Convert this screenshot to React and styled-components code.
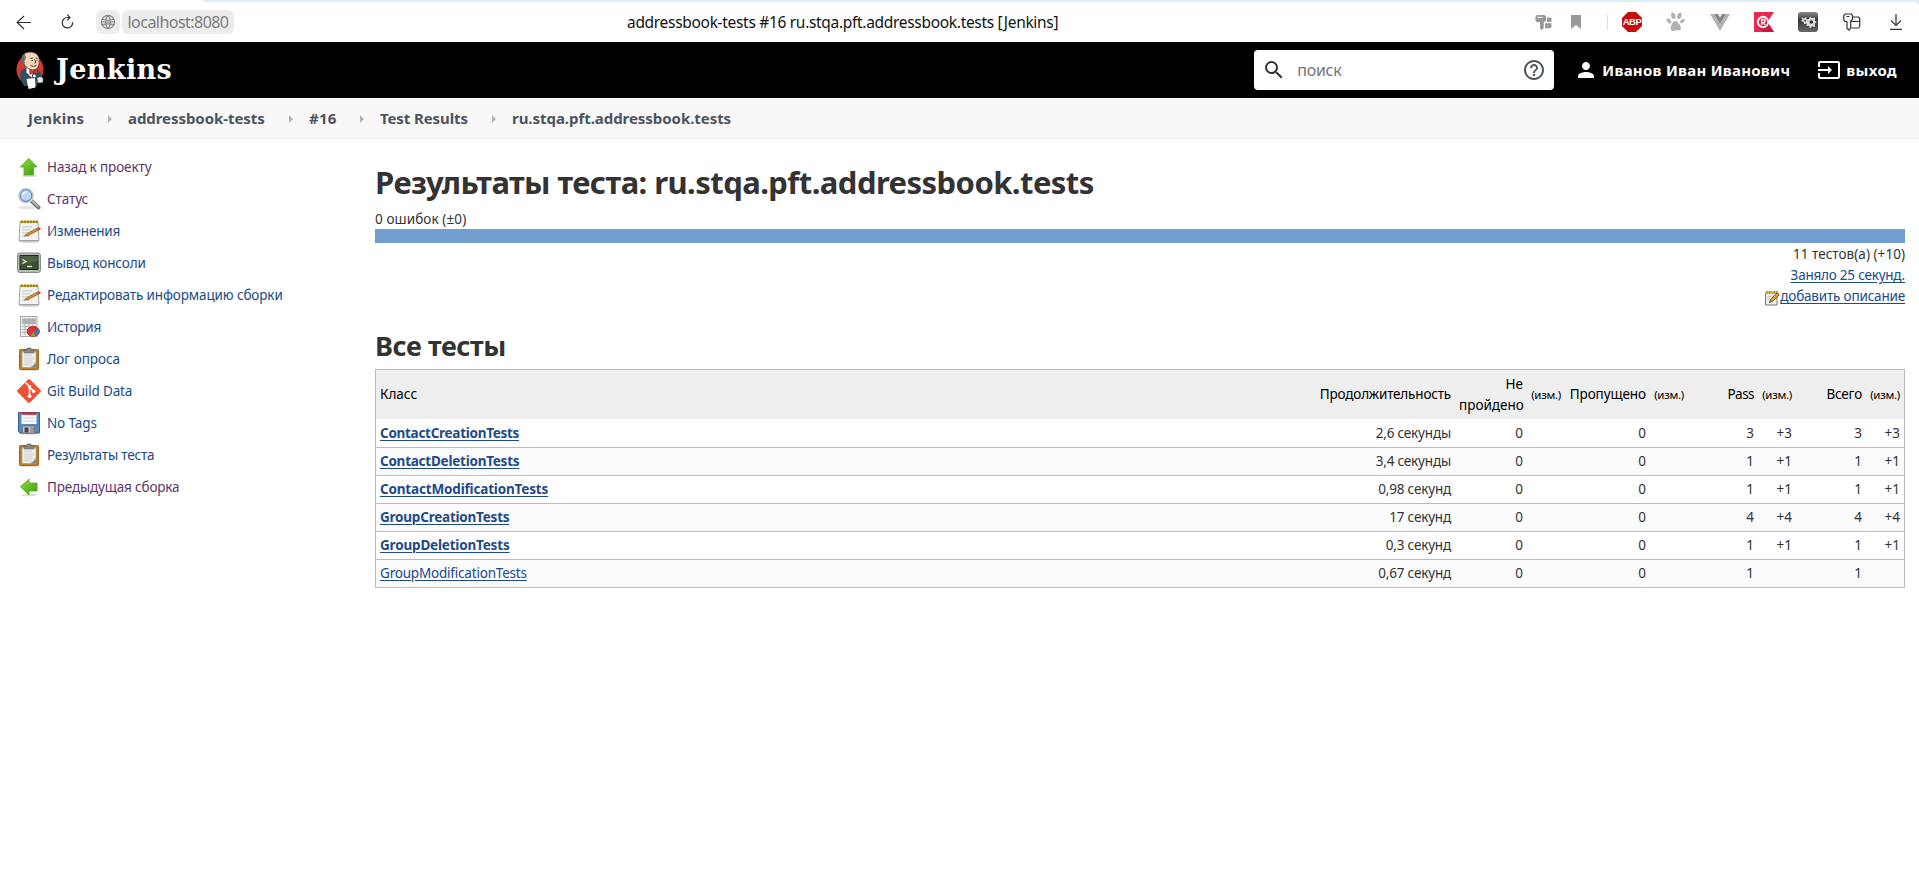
import React from 'react';
import styled, { createGlobalStyle, css } from 'styled-components';
import { MdSearch, MdHelpOutline, MdPerson, MdInput } from 'react-icons/md';

const Global = createGlobalStyle`
  * { box-sizing: border-box; }
  html, body { margin: 0; background: #fff; }
  body {
    font-family: 'Noto Sans', 'Open Sans', sans-serif;
    font-size: 13.5px;
    line-height: 21px;
    color: #333;
    overflow: hidden;
  }
  svg { display: block; flex: none; }
`;

const tracking = css`letter-spacing: ${(p) => p.$ls || 0}px;`;

/* ---------- browser bar ---------- */
const BrowserBar = styled.div`
  height: 42px;
  padding-top: 2px;
  background: linear-gradient(90deg, #fff 203px, #dbf0f5 203px);
`;
const BrowserInner = styled.div`
  height: 40px;
  display: grid;
  grid-template-columns: 620px 1fr 420px;
  align-items: center;
  background: #fff;
  border-radius: 0 5px 0 0;
`;
const BrowserLeft = styled.div`
  display: flex;
  align-items: center;
  padding-left: 16px;
`;
const ReloadSlot = styled.span`
  margin: 0 22px 0 29px;
`;
const Chip = styled.span`
  height: 24px;
  display: flex;
  align-items: center;
  justify-content: center;
  border-radius: 6px;
  background: #ececec;
`;
const GlobeChip = styled(Chip)`
  width: 24px;
  margin-right: 2px;
`;
const UrlChip = styled(Chip)`
  width: 112px;
  color: #7c7c7c;
  font-size: 16px;
  ${tracking}
`;
const PageTitle = styled.div`
  padding-left: 7px;
  color: #111;
  font-size: 15.5px;
  white-space: nowrap;
  ${tracking}
`;
const Extensions = styled.div`
  display: flex;
  align-items: center;
  padding-left: 36px;
`;
const Ext = styled.span`
  width: ${(p) => p.$w || 44}px;
  display: flex;
  justify-content: flex-start;
`;

/* ---------- Jenkins header ---------- */
const Header = styled.header`
  height: 56px;
  display: flex;
  align-items: center;
  padding: 0 22px 0 16px;
  background: #000;
  color: #fff;
`;
const Brand = styled.a`
  display: flex;
  align-items: center;
  gap: 12px;
`;
const BrandName = styled.span`
  font: 700 27px/40px 'DejaVu Serif', serif;
  ${tracking}
`;
const SearchBox = styled.div`
  width: 300px;
  height: 40px;
  margin-left: auto;
  padding: 0 8px;
  display: flex;
  align-items: center;
  background: #fff;
  border-radius: 4px;
  color: #333;
`;
const Placeholder = styled.span`
  flex: 1;
  padding-left: 11px;
  color: #757575;
  font-size: 16px;
  ${tracking}
`;
const HelpIcon = styled(MdHelpOutline)`
  color: #4d545d;
`;
const HeaderLink = styled.a`
  display: flex;
  align-items: center;
  gap: ${(p) => p.$gap}px;
  margin-left: ${(p) => p.$ml}px;
  font-size: 15px;
  font-weight: 700;
  white-space: nowrap;
  ${tracking}
`;

/* ---------- breadcrumbs ---------- */
const Crumbs = styled.nav`
  height: 41px;
  display: flex;
  align-items: center;
  padding: 1px 0 0 28px;
  background: #f8f8f8;
  border-bottom: 1px solid #ececec;
`;
const Crumb = styled.a`
  width: ${(p) => p.$w}px;
  color: #4d545d;
  font-size: 15px;
  font-weight: 700;
  white-space: nowrap;
  ${tracking}
`;
const CrumbArrow = styled.i`
  margin: 0 16px 0 26px;
  border: solid transparent;
  border-width: 4px 0 4px 4px;
  border-left-color: #b4b4b4;
`;

/* ---------- body ---------- */
const Page = styled.div`
  display: grid;
  grid-template-columns: 375px 1530px;
`;
const Side = styled.nav`
  padding: 12px 0 0 17px;
`;
const Task = styled.a`
  height: 32px;
  display: flex;
  align-items: center;
  gap: 6px;
  color: ${(p) => (p.$visited ? '#5c3566' : '#204a87')};
  white-space: nowrap;
  ${tracking}
`;
const TaskLabel = styled.span`
  padding-top: 1px;
`;
const Main = styled.main`
  padding-top: 20px;
`;
const H1 = styled.h1`
  margin: 0;
  font-size: 31px;
  line-height: 46px;
  font-weight: 700;
  white-space: nowrap;
  ${tracking}
`;
const Failures = styled.div`
  margin-top: 4px;
  line-height: 20px;
  ${tracking}
`;
const Bar = styled.div`
  height: 14px;
  margin-bottom: 1px;
  background: #729fcf;
`;
const Summary = styled.div`
  display: flex;
  flex-direction: column;
  align-items: flex-end;
`;
const SummaryText = styled.div`
  ${tracking}
`;
const Link = styled.a`
  color: #204a87;
  text-decoration: underline;
  text-underline-offset: 2px;
  font-weight: ${(p) => (p.$bold ? 700 : 400)};
  ${tracking}
`;
const DescriptionRow = styled.div`
  display: flex;
  align-items: center;
  svg { margin-top: 3px; }
`;
const H2 = styled.h2`
  margin: 20px 0 4px;
  font-size: 27px;
  line-height: 38px;
  font-weight: 700;
  ${tracking}
`;
const Table = styled.div`
  border: 1px solid #bbb;
`;
const Row = styled.div`
  display: grid;
  grid-template-columns: 1fr 140px 72px 38px 85px 38px 70px 38px 70px 38px;
  align-items: center;
  height: 28px;
  background: ${(p) => (p.$alt ? '#fbfbfb' : '#fff')};
  & + & { border-top: 1px solid #bbb; }
`;
const HeadRow = styled(Row)`
  height: 49px;
  background: #eee;
  color: #000;
  & + ${Row} { border-top: 0; }
`;
const Cell = styled.div`
  padding: 0 4px;
  text-align: ${(p) => (p.$left ? 'left' : 'right')};
  font-size: ${(p) => (p.$small ? 11.5 : 13.5)}px;
  white-space: ${(p) => (p.$wrap ? 'normal' : 'nowrap')};
  ${tracking}
`;

/* ---------- icons ---------- */
const Svg = ({ w = 24, h = w, vb = `0 0 ${w} ${h}`, children }) => (
  <svg width={w} height={h} viewBox={vb} fill="none">{children}</svg>
);

const BackIcon = () => (
  <Svg w={16} h={16}><path d="M1 8.5h14M8 2L1.2 8.5 8 15" stroke="#333" strokeWidth="1.2" /></Svg>
);
const ReloadIcon = () => (
  <Svg w={13} h={16}>
    <path d="M11.6 8.2a5.2 5.2 0 1 1-5-4.7h2.2" stroke="#333" strokeWidth="1.2" />
    <path d="M6.2.7L9 3.5 6.2 6.3" stroke="#333" strokeWidth="1.2" />
  </Svg>
);
const GlobeIcon = () => (
  <Svg w={16}>
    <g stroke="#858585" strokeWidth="1.2">
      <circle cx="8" cy="8" r="6.6" />
      <path d="M8 1.4C4.7 4.6 4.7 11.4 8 14.6M8 1.4c3.3 3.2 3.3 10 0 13.2M1.4 8h13.2M2.5 5.2c3 1.2 8 1.2 11 0M2.5 10.9c3-1.2 8-1.2 11 0" />
    </g>
  </Svg>
);
const KeyCardGrey = () => (
  <Svg w={17} h={17}>
    <path d="M2 1h7.5l1.5 1.5V7L8.800 8.200V14L7 16l-2-1.500V8.200H2L.5 6.700V2.500z" fill="#999" />
    <path d="M2.500 3.300h5" stroke="#fff" strokeWidth="1" />
    <path d="M12 3.500h3.500l1 1V8H12zM10 9.300h6.500V13l-1.200 1.200H10z" fill="#999" />
  </Svg>
);
const BookmarkIcon = () => (
  <Svg w={10} h={14}><path d="M0 0h10v14l-5-4-5 4z" fill="#999" /></Svg>
);
const Divider = styled.span`
  width: 1px;
  height: 15px;
  background: #ddd;
  margin: 0 14px 0 0;
`;
const AbpBadge = styled.span`
  width: 20px;
  height: 20px;
  background: #c70d0c;
  color: #fff;
  clip-path: polygon(30% 0, 70% 0, 100% 30%, 100% 70%, 70% 100%, 30% 100%, 0 70%, 0 30%);
  font: 700 9.5px/20px 'Liberation Sans Narrow', 'Liberation Sans', sans-serif;
  letter-spacing: -0.5px;
  text-align: center;
`;
const PawIcon = () => (
  <Svg w={20}>
    <g fill="#b0b0b0">
      <ellipse cx="7.300" cy="4" rx="2.100" ry="3.200" transform="rotate(-12 7 4)" />
      <ellipse cx="13.300" cy="3.800" rx="2" ry="3.200" transform="rotate(18 13 4)" />
      <ellipse cx="3" cy="9" rx="1.800" ry="2.800" transform="rotate(-40 3 9)" />
      <ellipse cx="16.700" cy="9.500" rx="1.600" ry="2.700" transform="rotate(55 17 9)" />
      <path d="M9 9c2.300-.5 3 1.700 4.500 3.400 2 2 1.900 5.800-.6 6-2.200.1-2.800-.7-4.200.2-2.300 1.200-4.200-.3-3.900-2.700.4-2.800 1.800-6.400 4.200-6.900z" />
    </g>
  </Svg>
);
const VueIcon = () => (
  <Svg w={20} h={17}>
    <path d="M0 0h4.200L10 10.200 15.800 0H20L10 17z" fill="#b4b4b4" />
    <path d="M4.200 0H8l2 3.500L12 0h3.800L10 10.200z" fill="#868686" />
  </Svg>
);
const RedFlagIcon = () => (
  <Svg w={20}>
    <path d="M0 0h20l-6.500 10L20 20H0z" fill="#e72a4f" />
    <path d="M14 6l-9 9.500L9 20h11l-6.500-10z" fill="#c91c45" />
    <circle cx="9" cy="10" r="5.200" stroke="#fff" strokeWidth="1.900" />
    <path d="M7.700 13V7.500h1.800a1.500 1.500 0 0 1 0 3.200H7.700m1.800 0l1.500 2.300" stroke="#fff" strokeWidth="1.400" />
  </Svg>
);
const MonoGearIcon = () => (
  <Svg w={20}>
    <defs><linearGradient id="mg" x1="0" y1="0" x2="0" y2="1"><stop stopColor="#8a8a8a" /><stop offset=".4" stopColor="#383838" /><stop offset="1" stopColor="#666" /></linearGradient></defs>
    <rect width="20" height="20" rx="3" fill="url(#mg)" />
    <path d="M3 5l3 1.500L8 5l.8 2.500L11 7l1-2.500 2 1.800 3-1-.2 3.200 2 1.500-2 1.500.2 3.500-3-.8-2 2-1-2.500-2.500.3.300-2.500L6 12 5.500 9.800 2.500 9l2-1z" fill="#ddd" />
    <circle cx="13.300" cy="10" r="1.800" fill="#333" />
    <circle cx="7.200" cy="8.800" r="1" fill="#555" />
  </Svg>
);
const KeyCardIcon = () => (
  <Svg w={18} h={18}>
    <g stroke="#333" strokeWidth="1.200" strokeLinejoin="round">
      <path d="M2.500 1H8l1.500 1.500v4L7.700 8v7.200L6 17l-2-1.800V8.500H2.200L.8 7V2.500z" />
      <path d="M3.500 3.500h3M10 4h5.500l1.200 1.200v8.300L15.500 15H8.500M8.500 8.500h8.200" />
    </g>
  </Svg>
);
const DownloadIcon = () => (
  <Svg w={12} h={16}><path d="M6 0v11.500M1 6.500l5 5 5-5M0 15.300h12" stroke="#333" strokeWidth="1.200" /></Svg>
);

const Butler = () => (
  <Svg w={28} h={38}>
    <ellipse cx="14" cy="18.500" rx="13.500" ry="15" fill="#d33833" />
    <path d="M5 19L10 17l6 3 5-1 4 3 1 7-4 2-1 4H8c-2-3-4-7-4-10z" fill="#335061" />
    <path d="M10.500 16.500l7 2-2 8-5-5z" fill="#fff" />
    <path d="M6 6C8 1.500 12 .8 16 1.200c5 .5 7.500 4 7.300 9 0 4-1.500 8-5.300 8.600-4 .6-8-2-9.500-5.300C6.500 12 5.500 9 6 6z" fill="#f0d6b7" stroke="#3a2d2a" strokeWidth=".7" />
    <path d="M8.500 3C5 5 4.700 9 6.500 12.500l2.500 2L8.500 10l1.500-3z" fill="#6d6b6d" />
    <path d="M14.500 7.500l2.500-.5M19.500 7l2 .5M18.500 8.500l1.500 3-1.500.8M14.500 14.300c2 1.400 4 1.200 6 0M15.500 9.500h1.500M20.500 9.500h1" stroke="#3a2d2a" strokeWidth=".9" />
    <path d="M13.500 18.500l4 1.500 4-1.500v4.500l-4-1.500-3.500 2z" fill="#d33833" stroke="#811" strokeWidth=".5" />
    <circle cx="18.300" cy="25" r="1.500" fill="#fff" />
    <path d="M10.500 28l8.500-1 .5 9.500-7 1.500z" fill="#fff" />
    <path d="M21 27c2-1.500 5-1.500 6 0v4.500l-5 .5z" fill="#e8e8e8" stroke="#555" strokeWidth=".5" />
  </Svg>
);

const Greens = ({ id }) => (
  <defs><linearGradient id={id} x1="0" y1="0" x2="1" y2="1"><stop stopColor="#8ee03a" /><stop offset="1" stopColor="#3c9a12" /></linearGradient></defs>
);
const UpIcon = () => (
  <Svg><Greens id="gu" /><ellipse cx="12" cy="20.800" rx="8" ry="1.500" fill="#ddd" />
    <path d="M11.700 3.300L20 12h-3.500v8h-9.500v-8H3.300z" fill="url(#gu)" stroke="#58a52c" strokeWidth=".8" /></Svg>
);
const LeftIcon = () => (
  <Svg><Greens id="gl" /><ellipse cx="12" cy="20" rx="8" ry="1.300" fill="#ddd" />
    <path d="M3.300 11.700L12 4v4h8v8h-8v4z" fill="url(#gl)" stroke="#58a52c" strokeWidth=".8" /></Svg>
);
const LensIcon = () => (
  <Svg>
    <ellipse cx="10" cy="20.500" rx="9" ry="2" fill="#e8e8e8" />
    <path d="M14.500 14l7 6.500" stroke="#777" strokeWidth="4" strokeLinecap="round" />
    <path d="M14.500 13.600l6.800 6.300" stroke="#bbb" strokeWidth="1.500" />
    <circle cx="9" cy="8.600" r="6.900" fill="#bcd6f3" stroke="#c9ccd0" strokeWidth="2" />
    <circle cx="9" cy="8.600" r="5.800" stroke="#4e7cb8" strokeWidth="1" />
    <path d="M5 8c0-3 3-4.500 6-3.500C9 6 7 7 5 8z" fill="#e9f3fd" />
  </Svg>
);
const NotepadIcon = () => (
  <Svg>
    <ellipse cx="12" cy="22.500" rx="10" ry="1.300" fill="#ccc" />
    <path d="M3 3h18l1 18.500H2z" fill="#f2f2f0" stroke="#999" strokeWidth=".9" />
    <path d="M3 1.800h18v2.200H3z" fill="#c4a32c" />
    <path d="M5 1.200v3M8 1.200v3M11 1.200v3M14 1.200v3M17 1.200v3M20 1.200v3" stroke="#806a1b" strokeWidth="1" />
    <path d="M5 8h10M5 11h8M5 14h5M5 17h8" stroke="#c6c6c6" strokeWidth="1" />
    <path d="M7.500 17l3-2.800 9.500-4.800 1.200 1.700-9.500 5.200z" fill="#d99a36" stroke="#80541a" strokeWidth=".8" />
    <path d="M20 9.300l2.300-1 1.700 1.200-2 1.800z" fill="#d5392c" />
  </Svg>
);
const SmallNotepadIcon = () => (
  <Svg w={16}>
    <path d="M1.500 2.500h11.500v12.500h-11.500z" fill="#eeeeec" stroke="#777" />
    <path d="M1 1.200h13v2.800H1z" fill="#e3bf2f" />
    <path d="M3 1v2.500M5.500 1v2.500M8 1v2.500M10.500 1v2.500M13 1v2.500" stroke="#8f7411" strokeWidth=".8" />
    <path d="M3.500 6.500h5M3.500 9h3" stroke="#c4c4c4" />
    <path d="M5.500 12.500l1.200-3 6.300-6.500 2.300 1.700-6.500 6.500z" fill="#e5a83b" stroke="#5f430d" strokeWidth=".9" />
  </Svg>
);
const TerminalIcon = () => (
  <Svg>
    <rect x=".5" y="2" width="23" height="19.500" rx="2.500" fill="#b9bbb5" stroke="#888a85" />
    <rect x="3" y="4.500" width="18" height="14" fill="#3c5130" stroke="#1c2716" />
    <path d="M3.500 5h17v5l-17 4z" fill="#4c6340" />
    <path d="M5.500 8.500L9 10.500l-3.500 2" stroke="#e8f5df" strokeWidth="1.300" />
    <path d="M10 15.500h5" stroke="#e8f5df" strokeWidth="1.400" />
    <path d="M15.500 20.300h2" stroke="#8ae234" />
  </Svg>
);
const HistoryIcon = () => (
  <Svg>
    <rect x="3.500" y="1.500" width="16.500" height="20" fill="#ececec" stroke="#aaa" />
    <path d="M5 3.500h14v5H5z" fill="#b5b5b5" />
    <path d="M5 8.500h14M5 11.500h14M5 14.500h14M5 17.500h14M8 3v17M12 3v17M16 3v17" stroke="#aaa" strokeWidth=".8" />
    <ellipse cx="16.300" cy="16.500" rx="6.200" ry="5" fill="#dc3434" stroke="#a40000" strokeWidth=".6" />
    <path d="M16.300 16.500l5.500-2c1 2.500.2 5-3 6.200z" fill="#4a76b8" />
    <path d="M16.300 16.500l2 4.600c-1.700.6-3.500.3-4.500-.4z" fill="#73b42c" />
  </Svg>
);
const ClipboardIcon = () => (
  <Svg>
    <ellipse cx="12" cy="22.800" rx="10" ry="1.200" fill="#ddd" />
    <rect x="2.500" y="2.500" width="19" height="20" rx=".8" fill="#c17d24" stroke="#a0691a" />
    <path d="M5 4.500h14v16H5z" fill="#eee" stroke="#999" strokeWidth=".6" />
    <path d="M7 8.500h8M7 11.500h10M7 14.500h8M7 17.500h6" stroke="#dadada" strokeWidth="2" />
    <path d="M13.500 20.500l5.500-5v5z" fill="#888a85" />
    <path d="M13.500 20.500l1-4 4.500-1z" fill="#fff" stroke="#aaa" strokeWidth=".4" />
    <path d="M7 6V3h3V1h4v2h3v3z" fill="#888a85" stroke="#666" strokeWidth=".6" />
  </Svg>
);
const GitIcon = () => (
  <Svg>
    <path d="M11 .5a1.500 1.500 0 0 1 2 0L23.500 11a1.500 1.500 0 0 1 0 2L13 23.500a1.500 1.500 0 0 1-2 0L.5 13a1.500 1.500 0 0 1 0-2z" fill="#f05033" />
    <path d="M8.500 3.500l4 4v10M12.500 8l4 4" stroke="#fff" strokeWidth="1.500" />
    <circle cx="12.500" cy="7.700" r="1.800" fill="#fff" /><circle cx="12.500" cy="17.200" r="1.900" fill="#fff" /><circle cx="16.600" cy="12.200" r="1.800" fill="#fff" />
  </Svg>
);
const FloppyIcon = () => (
  <Svg>
    <ellipse cx="12" cy="22.500" rx="10" ry="1" fill="#ccc" />
    <path d="M1.500 1.500h21v20.500H3L1.500 20.500z" fill="#5b86c4" stroke="#3d5f96" />
    <path d="M4.500 2h15v11h-15z" fill="#fbfbfb" />
    <path d="M4.500 1.500h15v2.300h-15z" fill="#dd2222" />
    <path d="M6 7h12M6 10h12" stroke="#ccc" />
    <path d="M5.500 15h12v7h-12z" fill="#c9c9c9" stroke="#555" strokeWidth=".6" />
    <path d="M7.500 16.500h4v5h-4z" fill="#444" />
    <path d="M13 16h4v5.500h-4z" fill="#9b9b9b" />
  </Svg>
);

/* ---------- data ---------- */
const tasks = [
  [UpIcon, 'Назад к проекту', -0.12, true],
  [LensIcon, 'Статус', -0.11, true],
  [NotepadIcon, 'Изменения', -0.2],
  [TerminalIcon, 'Вывод консоли', -0.12],
  [NotepadIcon, 'Редактировать информацию сборки', -0.12],
  [HistoryIcon, 'История', -0.2],
  [ClipboardIcon, 'Лог опроса', -0.05],
  [GitIcon, 'Git Build Data', -0.16],
  [FloppyIcon, 'No Tags', -0.14],
  [ClipboardIcon, 'Результаты теста', -0.18],
  [LeftIcon, 'Предыдущая сборка', -0.16, true],
];

const crumbs = [
  ['Jenkins', 54, 0.2],
  ['addressbook-tests', 135, -0.06],
  ['#16', 25, 0.3],
  ['Test Results', 86, -0.1],
  ['ru.stqa.pft.addressbook.tests', 220, -0.05],
];

const results = [
  ['ContactCreationTests', '2,6 секунды', 3, '+3', -0.28],
  ['ContactDeletionTests', '3,4 секунды', 1, '+1', -0.24],
  ['ContactModificationTests', '0,98 секунд', 1, '+1', -0.17],
  ['GroupCreationTests', '17 секунд', 4, '+4', -0.22],
  ['GroupDeletionTests', '0,3 секунд', 1, '+1', -0.18],
  ['GroupModificationTests', '0,67 секунд', 1, '', -0.2],
];

export default function App() {
  return (
    <>
      <Global />
      <BrowserBar>
        <BrowserInner>
          <BrowserLeft>
            <BackIcon />
            <ReloadSlot><ReloadIcon /></ReloadSlot>
            <GlobeChip><GlobeIcon /></GlobeChip>
            <UrlChip $ls={-0.54}>localhost:8080</UrlChip>
          </BrowserLeft>
          <PageTitle $ls={-0.31}>addressbook-tests #16 ru.stqa.pft.addressbook.tests [Jenkins]</PageTitle>
          <Extensions>
            <Ext $w={36}><KeyCardGrey /></Ext>
            <Ext $w={36}><BookmarkIcon /></Ext>
            <Divider />
            <Ext><AbpBadge>ABP</AbpBadge></Ext>
            <Ext><PawIcon /></Ext>
            <Ext><VueIcon /></Ext>
            <Ext><RedFlagIcon /></Ext>
            <Ext $w={45}><MonoGearIcon /></Ext>
            <Ext $w={47}><KeyCardIcon /></Ext>
            <DownloadIcon />
          </Extensions>
        </BrowserInner>
      </BrowserBar>

      <Header>
        <Brand>
          <Butler />
          <BrandName $ls={0.4}>Jenkins</BrandName>
        </Brand>
        <SearchBox>
          <MdSearch size={24} />
          <Placeholder $ls={-0.3}>поиск</Placeholder>
          <HelpIcon size={24} />
        </SearchBox>
        <HeaderLink $gap={4} $ml={20} $ls={0.26}>
          <MdPerson size={24} />
          Иванов Иван Иванович
        </HeaderLink>
        <HeaderLink $gap={5} $ml={27} $ls={0.38}>
          <MdInput size={24} />
          выход
        </HeaderLink>
      </Header>

      <Crumbs>
        {crumbs.map(([label, w, ls], i) => (
          <React.Fragment key={label}>
            {i > 0 && <CrumbArrow />}
            <Crumb $w={w} $ls={ls}>{label}</Crumb>
          </React.Fragment>
        ))}
      </Crumbs>

      <Page>
        <Side>
          {tasks.map(([Icon, label, ls, visited]) => (
            <Task key={label} $ls={ls} $visited={visited}>
              <Icon />
              <TaskLabel>{label}</TaskLabel>
            </Task>
          ))}
        </Side>

        <Main>
          <H1 $ls={-0.56}>Результаты теста: ru.stqa.pft.addressbook.tests</H1>
          <Failures $ls={0.1}>0 ошибок (±0)</Failures>
          <Bar />
          <Summary>
            <SummaryText $ls={0.04}>11 тестов(а) (+10)</SummaryText>
            <Link $ls={-0.22}>Заняло 25 секунд.</Link>
            <DescriptionRow>
              <SmallNotepadIcon />
              <Link $ls={-0.18}>добавить описание</Link>
            </DescriptionRow>
          </Summary>

          <H2 $ls={-0.39}>Все тесты</H2>
          <Table>
            <HeadRow>
              <Cell $left>Класс</Cell>
              <Cell $ls={-0.18}>Продолжительность</Cell>
              <Cell $wrap>Не пройдено</Cell>
              <Cell $small $ls={-0.3}>(изм.)</Cell>
              <Cell $ls={-0.08}>Пропущено</Cell>
              <Cell $small $ls={-0.3}>(изм.)</Cell>
              <Cell $ls={-0.54}>Pass</Cell>
              <Cell $small $ls={-0.3}>(изм.)</Cell>
              <Cell $ls={-0.2}>Всего</Cell>
              <Cell $small $ls={-0.3}>(изм.)</Cell>
            </HeadRow>
            {results.map(([name, time, count, diff, ls], i) => (
              <Row key={name} $alt={i % 2 === 1}>
                <Cell $left><Link $bold={diff !== ''} $ls={ls}>{name}</Link></Cell>
                <Cell $ls={-0.18}>{time}</Cell>
                <Cell>0</Cell>
                <Cell />
                <Cell>0</Cell>
                <Cell />
                <Cell>{count}</Cell>
                <Cell>{diff}</Cell>
                <Cell>{count}</Cell>
                <Cell>{diff}</Cell>
              </Row>
            ))}
          </Table>
        </Main>
      </Page>
    </>
  );
}
